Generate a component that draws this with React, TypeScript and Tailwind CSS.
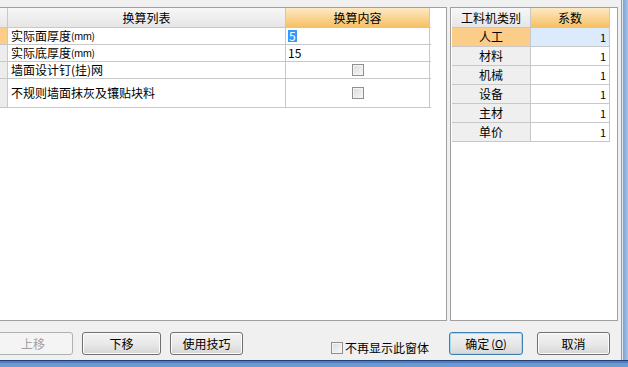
import React from 'react';

const font = { fontFamily: '"Noto Sans CJK SC", "Noto Sans", sans-serif' };

function Check() {
  return (
    <span className="inline-block w-[12px] h-[12px] border border-[#8f8f8f] bg-gradient-to-br from-[#dcdcdc] to-[#f7f7f7] shadow-[inset_0_0_0_1px_#f4f4f4]" />
  );
}

function Btn({ children, disabled, focus, className }: { children: React.ReactNode; disabled?: boolean; focus?: boolean; className?: string }) {
  const base = 'h-[23px] rounded-[3px] border flex items-center justify-center text-[12px] leading-none';
  if (disabled)
    return <div className={`${base} border-[#adb2b5] bg-[#f4f4f4] text-[#a0a0a0] ${className ?? ''}`}>{children}</div>;
  if (focus)
    return (
      <div className={`${base} border-[#3c7fb1] bg-gradient-to-b from-[#f2f2f2] via-[#e8e8e8] to-[#d8d8d8] text-black shadow-[inset_0_0_0_1px_#9fdcf6] ${className ?? ''}`}>
        {children}
      </div>
    );
  return (
    <div className={`${base} border-[#707070] bg-gradient-to-b from-[#f3f3f3] via-[#e9e9e9] to-[#d6d6d6] text-black shadow-[inset_0_0_0_1px_#fcfcfc] ${className ?? ''}`}>
      {children}
    </div>
  );
}

const grayHead = 'bg-gradient-to-b from-[#f7f7f7] to-[#e6e6e6]';
const orangeHead = 'bg-gradient-to-b from-[#fde9c2] to-[#f6c063]';

export default function App() {
  const leftRows = [
    { label: <>实际面厚度<span className="text-[10px] tracking-[-0.5px]">(mm)</span></>, value: <span className="bg-[#3399ff] text-white px-px">5</span>, h: 'h-[17px]', sel: true },
    { label: <>实际底厚度<span className="text-[10px] tracking-[-0.5px]">(mm)</span></>, value: <span>15</span>, h: 'h-[17px]' },
    { label: <>墙面设计钉(挂)网</>, check: true, h: 'h-[17px]' },
    { label: <>不规则墙面抹灰及镶贴块料</>, check: true, h: 'h-[29px]' },
  ];
  const rightRows = ['人工', '材料', '机械', '设备', '主材', '单价'];

  return (
    <div className="w-[628px] h-[367px] bg-[#f0f0f0] flex flex-col overflow-hidden text-black" style={font}>
      <div className="flex flex-1 min-h-0">
        <div className="flex-1 flex flex-col">
          {/* panels */}
          <div className="flex pt-[7px] h-[321px]">
            <div className="w-[447px] h-full border-t border-r border-b border-[#a0a0a0] bg-white">
              <div className="w-[431px] text-[12px] leading-none">
                <div className="flex h-[20px] border-b border-[#c8c8c8]">
                  <div className={`w-[8px] border-r border-[#c8c8c8] ${grayHead}`} />
                  <div className={`w-[278px] border-r border-[#c8c8c8] flex items-center justify-center ${grayHead}`}>换算列表</div>
                  <div className={`w-[144px] border-r border-[#c8c8c8] flex items-center justify-center ${orangeHead}`}>换算内容</div>
                </div>
                {leftRows.map((r, i) => (
                  <div key={i} className={`flex ${r.h} border-b border-[#c8c8c8]`}>
                    <div className={`w-[8px] border-r border-[#c8c8c8] ${r.sel ? 'bg-[#fbcd88]' : 'bg-[#ececec]'}`} />
                    <div className="w-[278px] border-r border-[#c8c8c8] flex items-center pl-[3px] whitespace-nowrap">{r.label}</div>
                    <div className={`w-[144px] border-r border-[#c8c8c8] flex items-center ${r.check ? 'justify-center pl-[1px]' : 'pl-[2px]'}`}>
                      {r.check ? <Check /> : r.value}
                    </div>
                  </div>
                ))}
              </div>
            </div>
            <div className="w-[3px]" />
            <div className="w-[168px] h-full border border-[#a0a0a0] bg-white pl-[1px]">
              <div className="w-[158px] text-[12px] leading-none">
                <div className="flex h-[20px] border-b border-[#c8c8c8]">
                  <div className={`w-[79px] border-r border-[#c8c8c8] flex items-center justify-center ${grayHead}`}>工料机类别</div>
                  <div className={`w-[79px] border-r border-[#c8c8c8] flex items-center justify-center ${orangeHead}`}>系数</div>
                </div>
                {rightRows.map((n, i) => (
                  <div key={n} className="flex h-[19px] border-b border-[#c8c8c8]">
                    <div className={`w-[79px] border-r border-[#c8c8c8] flex items-center justify-center ${i === 0 ? 'bg-[#fbcd88]' : 'bg-[#efefef]'}`}>{n}</div>
                    <div className={`w-[79px] border-r border-[#c8c8c8] flex items-center justify-end pr-[3px] text-[11px] ${i === 0 ? 'bg-[#dcebfb]' : 'bg-white'}`}>1</div>
                  </div>
                ))}
              </div>
            </div>
          </div>
          {/* buttons */}
          <div className="flex items-start pt-[11px]">
            <Btn disabled className="w-[80px] -ml-[7px]">上移</Btn>
            <Btn className="w-[79px] ml-[9px]">下移</Btn>
            <Btn className="w-[73px] ml-[9px]">使用技巧</Btn>
            <div className="flex items-center ml-[88px] mt-[10px] text-[12px] leading-none">
              <Check />
              <span className="ml-[2px]">不再显示此窗体</span>
            </div>
            <Btn focus className="w-[74px] ml-[20px]">
              确定<span className="text-[11px] ml-[2px]">(<span className="underline">O</span>)</span>
            </Btn>
            <Btn className="w-[73px] ml-[14px]">取消</Btn>
          </div>
        </div>
        {/* right window frame */}
        <div className="w-[7px] flex">
          <div className="w-[1px] bg-[#9a9a9a]" />
          <div className="w-[1px] bg-[#dfe8f3]" />
          <div className="flex-1 bg-gradient-to-r from-[#7aa3d6] to-[#a9c4e6]" />
        </div>
      </div>
      {/* bottom window frame */}
      <div className="h-[7px] flex flex-col">
        <div className="h-[1px] bg-[#1f3f73]" />
        <div className="h-[2px] bg-[#4f7fc0]" />
        <div className="flex-1 bg-[#6e9ad3]" />
      </div>
    </div>
  );
}
